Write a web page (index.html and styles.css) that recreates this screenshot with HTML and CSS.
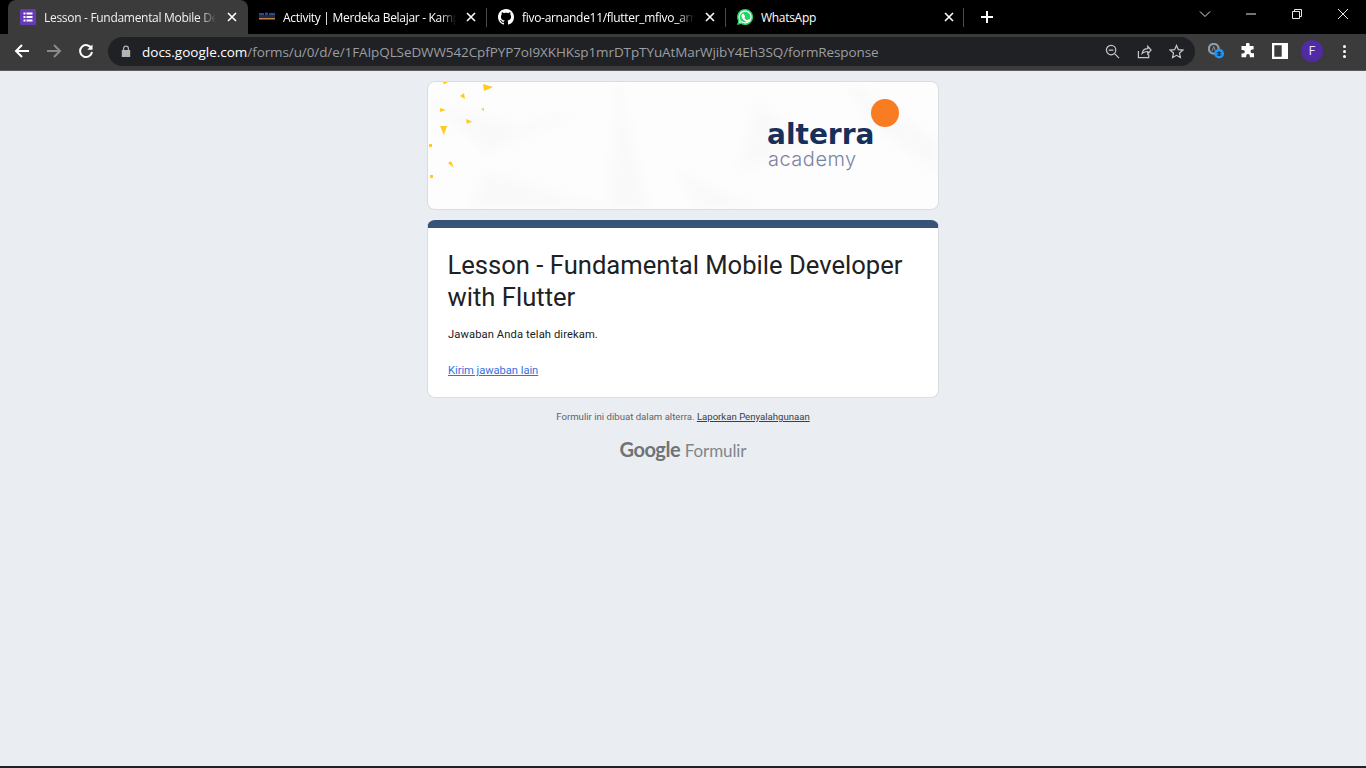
FILE: index.html
```html
<!DOCTYPE html>
<html>
<head>
    <title>Lesson - Fundamental Mobile Developer with Flutter</title>
    <link rel="stylesheet" href="styles.css">
</head>
<body>
    <div class="tabstrip">
        <div class="tab tab-active">
            <svg class="favicon" viewBox="0 0 16 16">
                <rect width="16" height="16" rx="1.5" fill="#673ab7"/>
                <path d="M3.500 3.500h2v2h-2zM6.500 3.500h6v2h-6zM3.500 7h2v2h-2zM6.500 7h6v2h-6zM3.500 10.500h2v2h-2zM6.500 10.500h6v2h-6z" fill="#fff"/>
            </svg>
            <span class="tab-title">Lesson - Fundamental Mobile De</span>
            <svg class="tab-close" viewBox="0 0 10 10"><path d="M1 1l8 8M9 1l-8 8"/></svg>
        </div>
        <div class="tab tab-second">
            <svg class="favicon favicon-wide" viewBox="0 0 18 16">
                <path d="M1 4h5v2H1zM7 3.500h3v2.500H7zM11 4h6v2h-6z" fill="#2d4a8c"/>
                <path d="M1 6h16v3H1z" fill="#1d2a55"/>
                <path d="M1 9h16v1.500H1z" fill="#c9803f"/>
            </svg>
            <span class="tab-title">Activity | Merdeka Belajar - Kamp</span>
            <svg class="tab-close" viewBox="0 0 10 10"><path d="M1 1l8 8M9 1l-8 8"/></svg>
        </div>
        <div class="tab tab-sep">
            <svg class="favicon" viewBox="0 0 16 16">
                <path fill="#fff" d="M8 0C3.58 0 0 3.58 0 8c0 3.54 2.29 6.53 5.47 7.590.4.070.55-.17.55-.38 0-.19-.010-.82-.010-1.490-2.010.37-2.530-.49-2.690-.94-.09-.23-.48-.94-.82-1.130-.28-.15-.68-.52-.010-.53.630-.010 1.080.58 1.230.82.720 1.210 1.870.87 2.330.66.070-.52.280-.87.510-1.070-1.780-.2-3.640-.89-3.640-3.950 0-.87.310-1.590.820-2.150-.08-.2-.36-1.020.080-2.120 0 0 .670-.21 2.200.82.640-.18 1.320-.27 2-.27s1.360.09 2 .27c1.530-1.040 2.200-.82 2.200-.82.440 1.100.160 1.920.080 2.120.510.560.820 1.270.820 2.150 0 3.070-1.870 3.750-3.650 3.950.290.250.540.730.540 1.480 0 1.070-.010 1.930-.010 2.200 0 .210.150.460.550.380A8.010 8.010 0 0 0 16 8c0-4.420-3.580-8-8-8z"/>
            </svg>
            <span class="tab-title">fivo-arnande11/flutter_mfivo_arn</span>
            <svg class="tab-close" viewBox="0 0 10 10"><path d="M1 1l8 8M9 1l-8 8"/></svg>
        </div>
        <div class="tab tab-sep tab-last">
            <svg class="favicon" viewBox="0 0 16 16">
                <path fill="#25d366" d="M8 0a8 8 0 0 0-6.900 12L0 16l4.100-1.070A8 8 0 1 0 8 0z"/>
                <path fill="#fff" d="M8 1.600A6.400 6.400 0 0 0 2.600 11.400l-.65 2.550 2.620-.68A6.400 6.400 0 1 0 8 1.600z"/>
                <path fill="#25d366" d="M8 2.700a5.300 5.300 0 0 0-4.400 8.200l-.4 1.800 1.800-.45A5.300 5.300 0 1 0 8 2.700z"/>
                <path fill="#fff" d="M6 4.700c-.2 0-.5.100-.8.400-.3.300-.8.800-.8 1.900s.8 2.200.9 2.300c.1.200 1.600 2.500 3.900 3.400 1.900.7 2.300.4 2.700.3.400 0 1.300-.5 1.400-1 .2-.5.200-.9.100-1l-1.500-.8c-.2-.1-.4-.1-.5.100l-.7.900c-.1.100-.3.200-.5.100-.7-.3-1.900-1-2.800-2.500-.1-.2 0-.3.100-.4l.5-.7c.1-.1.100-.3 0-.4L6.700 5c-.2-.3-.4-.3-.7-.3z"/>
            </svg>
            <span class="tab-title">WhatsApp</span>
            <svg class="tab-close" viewBox="0 0 10 10"><path d="M1 1l8 8M9 1l-8 8"/></svg>
        </div>
        <svg class="new-tab" viewBox="0 0 14 14"><path d="M7 1v12M1 7h12"/></svg>
        <div class="window-controls">
            <svg viewBox="0 0 12 12"><path d="M1 3.500l5 5 5-5"/></svg>
            <svg viewBox="0 0 12 12"><path d="M1 6h10"/></svg>
            <svg viewBox="0 0 12 12"><path d="M1.500 3.500h7v7h-7zM3.500 3.500v-2h7v7h-2"/></svg>
            <svg viewBox="0 0 12 12"><path d="M1 1l10 10M11 1L1 11"/></svg>
        </div>
    </div>

    <div class="toolbar">
        <div class="nav-buttons">
            <svg class="nav-icon" viewBox="0 0 16 16"><path d="M15 8H2M8 2L2 8l6 6"/></svg>
            <svg class="nav-icon nav-off" viewBox="0 0 16 16"><path d="M1 8h13M8 2l6 6-6 6"/></svg>
            <svg class="nav-icon" viewBox="0 0 16 16"><path d="M13.500 5.500A6 6 0 1 0 14 9"/><path class="solid" d="M14.500 1.500v5.200H9.300z"/></svg>
        </div>
        <div class="omnibox">
            <svg class="lock" viewBox="0 0 10 12"><path d="M2 5V3.500a3 3 0 0 1 6 0V5h1.200v7H.8V5zM3.200 5h3.600V3.500a1.800 1.800 0 0 0-3.600 0z"/></svg>
            <span class="url"><span class="url-host">docs.google.com</span>/forms/u/0/d/e/1FAIpQLSeDWW542CpfPYP7oI9XKHKsp1mrDTpTYuAtMarWjibY4Eh3SQ/formResponse</span>
            <div class="omni-actions">
                <svg viewBox="0 0 16 16"><circle cx="6.500" cy="6.500" r="5"/><path d="M10.200 10.200L15 15M4 6.500h5"/></svg>
                <svg viewBox="0 0 16 16"><path d="M1.500 7.500V14.500h11V11M5.500 10c.5-3 3-5 6-5V2.500l3.500 4-3.500 4V8c-2.500 0-4.500.5-6 2z"/></svg>
                <svg viewBox="0 0 16 16"><path d="M8 1.500l2 4.500 4.800.5-3.600 3.200 1 4.800L8 12.100l-4.200 2.400 1-4.800L1.200 6.500 6 6z"/></svg>
            </div>
        </div>
        <div class="extensions">
            <svg class="ext" viewBox="0 0 18 18">
                <circle cx="6.500" cy="6.500" r="5.500" fill="none" stroke="#8e9baa" stroke-width="2.500"/>
                <path d="M4.500 9l2-5 2 5" fill="none" stroke="#8e9baa" stroke-width="1"/>
                <circle cx="12.500" cy="12" r="5.500" fill="#2196f3"/>
                <path d="M10 11h5M10 13.500h5M12.500 9.500v5" stroke="#123" stroke-width="1" fill="none"/>
            </svg>
            <svg class="ext" viewBox="0 0 16 16"><path fill="#fff" d="M6 1.500a1.800 1.800 0 0 1 3.600 0V3h4v3.600h-1.300a1.800 1.800 0 0 0 0 3.600H14v4H9.800v-1.300a1.800 1.800 0 0 0-3.600 0v1.300H1.500V10.500H3a1.800 1.800 0 0 0 0-3.600H1.500V3H6z"/></svg>
            <svg class="ext" viewBox="0 0 14 14"><path fill="#fff" d="M0 0h14v14H0zM8.500 2H2v10h6.500z" fill-rule="evenodd"/></svg>
            <span class="avatar">F</span>
            <span class="dots"><i></i><i></i><i></i></span>
        </div>
    </div>

    <div class="page">
        <div class="form-column">
            <div class="banner">
                <svg class="texture" viewBox="0 0 510 127" preserveAspectRatio="none">
                    <path d="M0 20L90 45 150 30 60 70zM190 0l30 127-40 0zM330 20l50 40-70 30zM420 0l90 60v30L440 40zM60 90l120 37H40zM250 90l80 37h-60z" fill="#f9f9f9"/>
                </svg>
                <svg class="sparks" viewBox="0 0 70 110">
                    <path d="M15 0h5l-4 2.500zM55 2l10 3-9 4zM32 14l4-3 1 6zM12 26l6 2-6 2zM53 27l3-1v3zM38 37l6 2.500-5 2.500zM12 44h7l-3 9zM1 62h3v3H1zM20 81l3-2 3 7zM2 93h3v3H2z" fill="#ffcb20"/>
                </svg>
                <div class="logo">
                    <span class="logo-dot"></span>
                    <span class="logo-main">alterra</span>
                    <span class="logo-sub">academy</span>
                </div>
            </div>
            <div class="card">
                <h1>Lesson - Fundamental Mobile Developer with Flutter</h1>
                <p class="confirm">Jawaban Anda telah direkam.</p>
                <a class="again" href="#">Kirim jawaban lain</a>
            </div>
            <p class="footer-note">Formulir ini dibuat dalam alterra. <a href="#">Laporkan Penyalahgunaan</a></p>
            <div class="brand"><span class="brand-google">Google</span> <span class="brand-forms">Formulir</span></div>
        </div>
    </div>
</body>
</html>
```

FILE: styles.css
```css
* {
    box-sizing: border-box;
    margin: 0;
    padding: 0;
}

html, body {
    height: 768px;
    overflow: hidden;
}

body {
    display: flex;
    flex-direction: column;
    background: #eaeef2;
    font-family: 'Roboto', 'Liberation Sans', sans-serif;
    border-bottom: 2px solid #202124;
}

/* tab strip */
.tabstrip {
    height: 34px;
    background: #000;
    display: flex;
    align-items: flex-end;
    padding-left: 8px;
    flex: none;
}

.tab {
    position: relative;
    width: 239px;
    height: 34px;
    padding: 0 9px 0 12px;
    display: flex;
    align-items: center;
    gap: 8px;
    color: #fff;
    font-family: 'Open Sans', 'Noto Sans', sans-serif;
    font-size: 12px;
    letter-spacing: -0.3px;
}

.tab-active {
    width: 240px;
    margin-right: -1px;
    padding-right: 10px;
    background: #3b3b3b;
    border-radius: 8px 8px 0 0;
    color: #f1f1f1;
}

.tab-second {
    padding-left: 11px;
    gap: 7px;
}

.tab-sep::before {
    content: "";
    position: absolute;
    left: 0;
    top: 8px;
    height: 19px;
    width: 1px;
    background: #4a4a4a;
}

.tab-last::after {
    content: "";
    position: absolute;
    right: 0;
    top: 8px;
    height: 19px;
    width: 1px;
    background: #4a4a4a;
}

.favicon {
    width: 16px;
    height: 16px;
    flex: none;
}

.favicon-wide {
    width: 18px;
}

.tab-title {
    flex: 1;
    min-width: 0;
    white-space: nowrap;
    -webkit-mask-image: linear-gradient(to right, #000 calc(100% - 16px), transparent);
    mask-image: linear-gradient(to right, #000 calc(100% - 16px), transparent);
}

.tab-last .tab-title {
    -webkit-mask-image: none;
    mask-image: none;
}

.tab-close {
    width: 10px;
    height: 10px;
    flex: none;
    margin: 0 1px 0 3px;
    fill: none;
    stroke: #fff;
    stroke-width: 1.6;
}

.new-tab {
    width: 14px;
    height: 14px;
    margin: 0 0 10px 16px;
    fill: none;
    stroke: #fff;
    stroke-width: 2;
}

.window-controls {
    margin-left: auto;
    display: flex;
    align-items: center;
    height: 28px;
    align-self: flex-start;
    padding-right: 17px;
    gap: 34px;
}

.window-controls svg {
    width: 12px;
    height: 12px;
    fill: none;
    stroke: #e6e6e6;
    stroke-width: 1;
}

/* toolbar */
.toolbar {
    height: 37px;
    background: #3b3b3b;
    border-bottom: 1px solid #5a5a5a;
    display: flex;
    align-items: center;
    padding: 0 0 2px 14px;
    flex: none;
}

.nav-buttons {
    display: flex;
    gap: 16px;
    width: 94px;
}

.nav-icon {
    width: 16px;
    height: 16px;
    fill: none;
    stroke: #fff;
    stroke-width: 2;
}

.nav-off {
    stroke: #8a8a8a;
}

.nav-icon .solid {
    fill: #fff;
    stroke: none;
}

.omnibox {
    width: 1087px;
    height: 29px;
    background: #202124;
    border-radius: 15px;
    display: flex;
    align-items: center;
    padding: 0 11px 0 13px;
}

.lock {
    width: 10px;
    height: 12px;
    fill: #b4b4b4;
    fill-rule: evenodd;
    flex: none;
    margin-right: 11px;
}

.url {
    color: #9b9ea3;
    font-family: 'Open Sans', 'Noto Sans', sans-serif;
    font-size: 13.5px;
    white-space: nowrap;
    letter-spacing: -0.1px;
    padding-top: 1px;
}

.url-host {
    color: #fff;
    letter-spacing: 0;
}

.omni-actions {
    margin-left: auto;
    display: flex;
    gap: 17px;
}

.omni-actions svg {
    width: 15px;
    height: 15px;
    fill: none;
    stroke: #c7c7c7;
    stroke-width: 1.3;
}

.extensions {
    display: flex;
    align-items: center;
    margin-left: 13px;
    gap: 16px;
}

.ext {
    width: 16px;
    height: 16px;
}

.avatar {
    width: 22px;
    height: 22px;
    border-radius: 50%;
    background: #4f2ba5;
    color: #e6e0f5;
    font-size: 12px;
    display: flex;
    align-items: center;
    justify-content: center;
    margin-left: -3px;
}

.dots {
    display: flex;
    flex-direction: column;
    gap: 2px;
    margin-left: 4px;
}

.dots i {
    display: block;
    width: 3px;
    height: 3px;
    border-radius: 50%;
    background: #fff;
}

/* form */
.page {
    flex: 1;
    display: flex;
    justify-content: center;
    padding: 10px 0 0 0;
}

.form-column {
    width: 512px;
}

.banner {
    position: relative;
    height: 129px;
    background: #fdfdfd;
    border: 1px solid #dadce0;
    border-radius: 8px;
    overflow: hidden;
    margin-bottom: 10px;
}

.texture {
    position: absolute;
    left: 0;
    top: 0;
    width: 100%;
    height: 100%;
    filter: blur(5px);
}

.sparks {
    position: absolute;
    left: 0;
    top: 0;
    width: 70px;
    height: 110px;
}

.logo {
    position: absolute;
    left: 340px;
    top: 16px;
    width: 140px;
    height: 80px;
}

.logo-dot {
    position: absolute;
    left: 103px;
    top: 1px;
    width: 28px;
    height: 28px;
    border-radius: 50%;
    background: #f97b22;
}

.logo-main {
    position: absolute;
    left: -1px;
    top: 25px;
    font-family: 'DejaVu Sans', 'Inter', sans-serif;
    font-weight: 700;
    font-size: 28px;
    line-height: 24px;
    color: #182f5b;
}

.logo-sub {
    position: absolute;
    left: 0;
    top: 51px;
    font-family: 'Inter', 'Lato', sans-serif;
    font-weight: 300;
    font-size: 20px;
    line-height: 20px;
    letter-spacing: 0.5px;
    color: #7a84a0;
}

.card {
    background: #fff;
    border: 1px solid #dadce0;
    border-top: 8px solid #375378;
    border-radius: 8px;
    height: 178px;
    padding: 21px 20px 0 19.5px;
}

.card h1 {
    font-size: 25.6px;
    font-weight: 400;
    line-height: 32px;
    color: #202124;
}

.confirm {
    font-size: 11.2px;
    line-height: 16px;
    color: #202124;
    letter-spacing: 0.1px;
    margin: 14px 0 0 0.5px;
}

.again {
    display: inline-block;
    font-size: 11.2px;
    line-height: 16px;
    color: #3b6fe0;
    margin: 20px 0 0 0.5px;
    letter-spacing: -0.05px;
}

.footer-note {
    font-size: 9.6px;
    line-height: 14px;
    color: #5f6368;
    text-align: center;
    margin-top: 12px;
}

.footer-note a {
    color: #3c4043;
}

.brand {
    text-align: center;
    margin-top: 12px;
    font-size: 19px;
    line-height: 26px;
    color: #80868b;
}

.brand-google {
    font-family: 'Lato', 'Roboto', sans-serif;
    font-weight: 700;
    font-size: 20px;
    color: #6f7377;
    letter-spacing: -0.5px;
}

.brand-forms {
    font-family: 'Lato', 'Roboto', sans-serif;
    font-size: 17px;
    letter-spacing: -0.1px;
}
```
